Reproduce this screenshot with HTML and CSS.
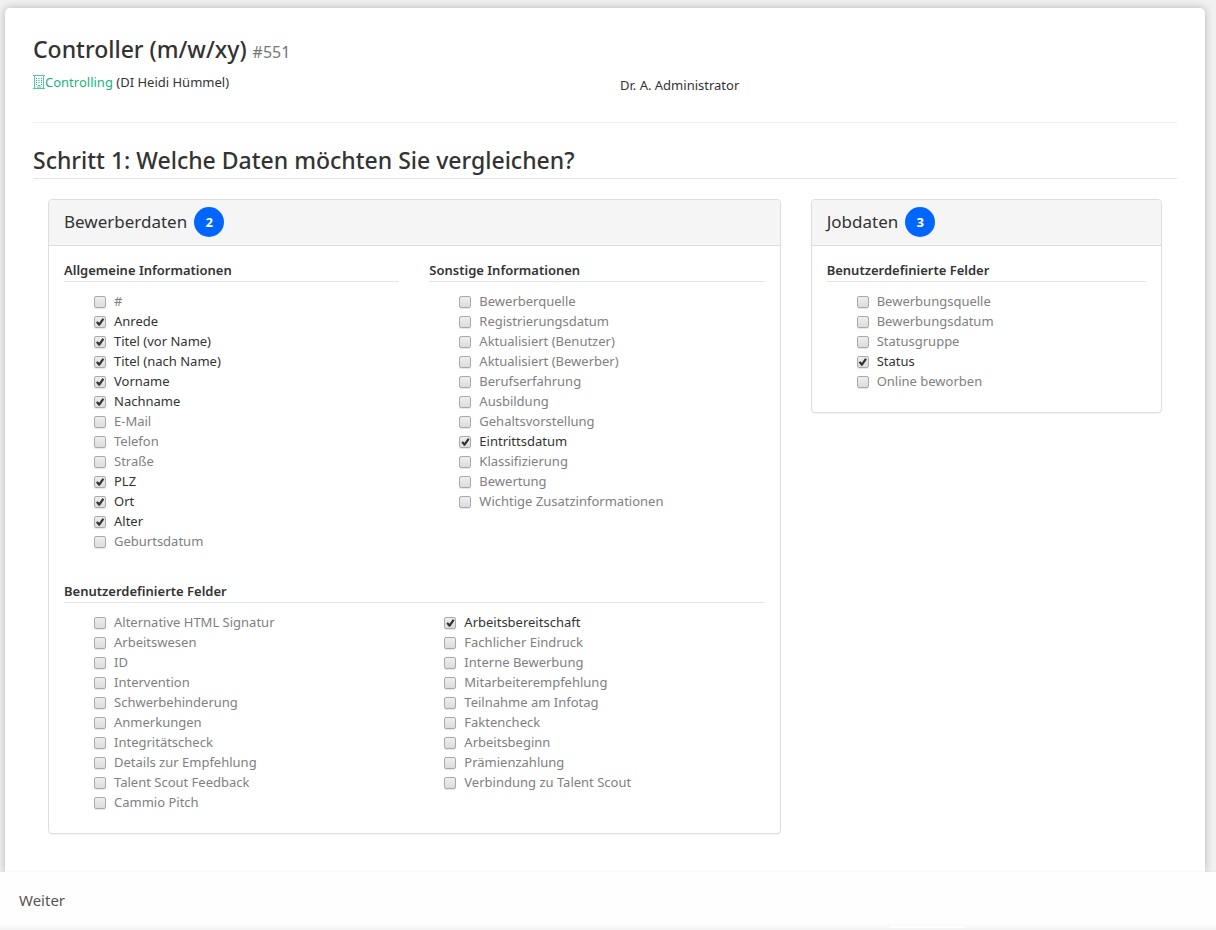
FILE: index.html
```html
<!DOCTYPE html>
<html lang="de">
<head>
<meta charset="utf-8">
<meta name="viewport" content="width=device-width, initial-scale=1">
<title>Controller (m/w/xy)</title>
<link rel="stylesheet" href="styles.css">
</head>
<body>
<main class="sheet">
  <header class="job">
    <div class="job-main">
      <h1 class="title">Controller (m/w/xy) <small class="number">#551</small></h1>
      <p class="department"><svg class="building" viewBox="0 0 12 14" width="12" height="14" aria-hidden="true"><path d="M0 .5h12M1.500 1v12M10.500 1v12M0 13.500h12M5 13v-2.500h2V13" fill="none" stroke="currentColor" stroke-opacity=".75"/><path d="M3 3h1v1H3zM5.500 3h1v1h-1zM8 3h1v1H8zM3 5h1v1H3zM5.500 5h1v1h-1zM8 5h1v1H8zM3 7h1v1H3zM5.500 7h1v1h-1zM8 7h1v1H8zM3 9h1v1H3zM8 9h1v1H8z" fill="currentColor"/></svg><a class="link" href="#controlling">Controlling</a> (DI Heidi Hümmel)</p>
    </div>
    <p class="owner">Dr. A. Administrator</p>
  </header>

  <h2 class="step">Schritt 1: Welche Daten möchten Sie vergleichen?</h2>

  <div class="panels">
    <section class="panel">
      <h3 class="panel-head">Bewerberdaten <span class="badge">2</span></h3>
      <div class="panel-body">
        <div class="pair">
          <div>
            <h4 class="group">Allgemeine Informationen</h4>
            <div class="list">
              <label class="option"><input class="check" type="checkbox"><span class="text">#</span></label>
              <label class="option"><input class="check" type="checkbox" checked><span class="text">Anrede</span></label>
              <label class="option"><input class="check" type="checkbox" checked><span class="text">Titel (vor Name)</span></label>
              <label class="option"><input class="check" type="checkbox" checked><span class="text">Titel (nach Name)</span></label>
              <label class="option"><input class="check" type="checkbox" checked><span class="text">Vorname</span></label>
              <label class="option"><input class="check" type="checkbox" checked><span class="text">Nachname</span></label>
              <label class="option"><input class="check" type="checkbox"><span class="text">E-Mail</span></label>
              <label class="option"><input class="check" type="checkbox"><span class="text">Telefon</span></label>
              <label class="option"><input class="check" type="checkbox"><span class="text">Straße</span></label>
              <label class="option"><input class="check" type="checkbox" checked><span class="text">PLZ</span></label>
              <label class="option"><input class="check" type="checkbox" checked><span class="text">Ort</span></label>
              <label class="option"><input class="check" type="checkbox" checked><span class="text">Alter</span></label>
              <label class="option"><input class="check" type="checkbox"><span class="text">Geburtsdatum</span></label>
            </div>
          </div>
          <div>
            <h4 class="group">Sonstige Informationen</h4>
            <div class="list">
              <label class="option"><input class="check" type="checkbox"><span class="text">Bewerberquelle</span></label>
              <label class="option"><input class="check" type="checkbox"><span class="text">Registrierungsdatum</span></label>
              <label class="option"><input class="check" type="checkbox"><span class="text">Aktualisiert (Benutzer)</span></label>
              <label class="option"><input class="check" type="checkbox"><span class="text">Aktualisiert (Bewerber)</span></label>
              <label class="option"><input class="check" type="checkbox"><span class="text">Berufserfahrung</span></label>
              <label class="option"><input class="check" type="checkbox"><span class="text">Ausbildung</span></label>
              <label class="option"><input class="check" type="checkbox"><span class="text">Gehaltsvorstellung</span></label>
              <label class="option"><input class="check" type="checkbox" checked><span class="text">Eintrittsdatum</span></label>
              <label class="option"><input class="check" type="checkbox"><span class="text">Klassifizierung</span></label>
              <label class="option"><input class="check" type="checkbox"><span class="text">Bewertung</span></label>
              <label class="option"><input class="check" type="checkbox"><span class="text">Wichtige Zusatzinformationen</span></label>
            </div>
          </div>
        </div>
        <div>
          <h4 class="group">Benutzerdefinierte Felder</h4>
          <div class="halves">
            <div class="list">
              <label class="option"><input class="check" type="checkbox"><span class="text">Alternative HTML Signatur</span></label>
              <label class="option"><input class="check" type="checkbox"><span class="text">Arbeitswesen</span></label>
              <label class="option"><input class="check" type="checkbox"><span class="text">ID</span></label>
              <label class="option"><input class="check" type="checkbox"><span class="text">Intervention</span></label>
              <label class="option"><input class="check" type="checkbox"><span class="text">Schwerbehinderung</span></label>
              <label class="option"><input class="check" type="checkbox"><span class="text">Anmerkungen</span></label>
              <label class="option"><input class="check" type="checkbox"><span class="text">Integritätscheck</span></label>
              <label class="option"><input class="check" type="checkbox"><span class="text">Details zur Empfehlung</span></label>
              <label class="option"><input class="check" type="checkbox"><span class="text">Talent Scout Feedback</span></label>
              <label class="option"><input class="check" type="checkbox"><span class="text">Cammio Pitch</span></label>
            </div>
            <div class="list">
              <label class="option"><input class="check" type="checkbox" checked><span class="text">Arbeitsbereitschaft</span></label>
              <label class="option"><input class="check" type="checkbox"><span class="text">Fachlicher Eindruck</span></label>
              <label class="option"><input class="check" type="checkbox"><span class="text">Interne Bewerbung</span></label>
              <label class="option"><input class="check" type="checkbox"><span class="text">Mitarbeiterempfehlung</span></label>
              <label class="option"><input class="check" type="checkbox"><span class="text">Teilnahme am Infotag</span></label>
              <label class="option"><input class="check" type="checkbox"><span class="text">Faktencheck</span></label>
              <label class="option"><input class="check" type="checkbox"><span class="text">Arbeitsbeginn</span></label>
              <label class="option"><input class="check" type="checkbox"><span class="text">Prämienzahlung</span></label>
              <label class="option"><input class="check" type="checkbox"><span class="text">Verbindung zu Talent Scout</span></label>
            </div>
          </div>
        </div>
      </div>
    </section>

    <section class="panel">
      <h3 class="panel-head">Jobdaten <span class="badge">3</span></h3>
      <div class="panel-body">
        <div>
          <h4 class="group">Benutzerdefinierte Felder</h4>
          <div class="list">
            <label class="option"><input class="check" type="checkbox"><span class="text">Bewerbungsquelle</span></label>
            <label class="option"><input class="check" type="checkbox"><span class="text">Bewerbungsdatum</span></label>
            <label class="option"><input class="check" type="checkbox"><span class="text">Statusgruppe</span></label>
            <label class="option"><input class="check" type="checkbox" checked><span class="text">Status</span></label>
            <label class="option"><input class="check" type="checkbox"><span class="text">Online beworben</span></label>
          </div>
        </div>
      </div>
    </section>
  </div>
</main>
<footer class="actions">
  <button class="next" type="button">Weiter</button>
</footer>
</body>
</html>
```

FILE: styles.css
```css
* {
  box-sizing: border-box;
}

body {
  display: flex;
  flex-direction: column;
  min-height: 100vh;
  margin: 0;
  background: #f1f1f1;
  color: #333;
  font: 13px/20px "Noto Sans", "Open Sans", sans-serif;
}

h1, h2, h3, h4, p {
  margin: 0;
}

.sheet {
  flex: 1;
  margin: 8px 11px 0 5px;
  padding: 23px 28px 38px;
  border-radius: 5px 5px 0 0;
  background: #fff;
  box-shadow: 0 0 8px rgba(0, 0, 0, .25);
}

.job {
  display: grid;
  grid-template-columns: 1fr 1fr;
  gap: 30px;
  padding-bottom: 27px;
  border-bottom: 1px solid #eee;
}

.title {
  font-size: 23px;
  line-height: 36px;
  font-weight: 500;
}

.number {
  color: #777;
  font-size: 16px;
  font-weight: 400;
}

.department {
  padding-top: 2px;
}

.building {
  color: #18b57e;
  vertical-align: -2px;
}

.link {
  color: #18b57e;
  text-decoration: none;
}

.owner {
  padding-top: 44px;
}

.step {
  margin-top: 20px;
  border-bottom: 1px solid #e5e5e5;
  font-size: 23px;
  line-height: 35px;
  font-weight: 500;
}

.panels {
  display: grid;
  grid-template-columns: 2fr 1fr;
  align-items: start;
  margin-top: 20px;
}

.panel {
  margin: 0 15px;
  border: 1px solid #ddd;
  border-radius: 4px;
  box-shadow: 0 1px 1px rgba(0, 0, 0, .05);
}

.panel-head {
  display: flex;
  align-items: center;
  gap: 7px;
  height: 46px;
  padding: 0 15px 2px;
  border-bottom: 1px solid #ddd;
  border-radius: 3px 3px 0 0;
  background: #f5f5f5;
  font-size: 17px;
  font-weight: 400;
}

.badge {
  width: 30px;
  border-radius: 50%;
  background: #06f;
  color: #fff;
  font-size: 13px;
  line-height: 30px;
  font-weight: 700;
  text-align: center;
}

.panel-body {
  display: grid;
  gap: 29px;
  padding: 14px 15px 20px;
}

.pair {
  display: grid;
  grid-template-columns: 1fr 1fr;
  gap: 30px;
}

.halves {
  display: grid;
  grid-template-columns: 1fr 1fr;
}

.group {
  border-bottom: 1px solid #e5e5e5;
  font-size: 13px;
  line-height: 21px;
  font-weight: 600;
}

.list {
  display: flex;
  flex-direction: column;
  align-items: flex-start;
  padding: 10px 0 0 30px;
}

.option {
  display: flex;
  align-items: center;
  gap: 8px;
}

.check {
  appearance: none;
  display: grid;
  width: 12px;
  height: 12px;
  margin: 0;
  border: 1px solid #aaa;
  border-radius: 2px;
  background: linear-gradient(#eee, #dcdcdc);
  box-shadow: 0 1px 1px rgba(0, 0, 0, .1);
}

.check:checked::before {
  content: "";
  background: #333;
  clip-path: polygon(10% 55%, 26% 42%, 42% 58%, 76% 10%, 92% 24%, 48% 88%, 36% 88%);
}

.text {
  padding-bottom: 2px;
  color: #808080;
  line-height: 18px;
}

.check:checked + .text {
  color: #333;
}

.actions {
  position: sticky;
  bottom: 0;
  padding: 18px 19px 0;
  background: #fefefe;
  box-shadow: 0 -1px 2px rgba(0, 0, 0, .03);
}

.actions::after {
  content: "";
  display: block;
  height: 6px;
  margin: 14px -19px 0;
  background:
    linear-gradient(#fff, #fff) 78% 2px / 76px 2px no-repeat,
    linear-gradient(#fcfcfc, #f3f3f3);
}

.next {
  display: block;
  padding: 0;
  border: 0;
  background: none;
  color: #555;
  font: 15px/20px "Noto Sans", "Open Sans", sans-serif;
}
```
